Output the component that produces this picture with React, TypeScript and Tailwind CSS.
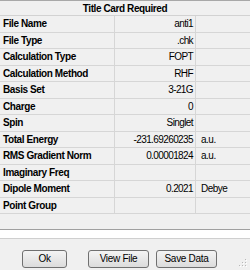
import React from "react";

const rows: { label: string; value: string; unit?: string }[] = [
  { label: "File Name", value: "anti1" },
  { label: "File Type", value: ".chk" },
  { label: "Calculation Type", value: "FOPT" },
  { label: "Calculation Method", value: "RHF" },
  { label: "Basis Set", value: "3-21G" },
  { label: "Charge", value: "0" },
  { label: "Spin", value: "Singlet" },
  { label: "Total Energy", value: "-231.69260235", unit: "a.u." },
  { label: "RMS Gradient Norm", value: "0.00001824", unit: "a.u." },
  { label: "Imaginary Freq", value: "" },
  { label: "Dipole Moment", value: "0.2021", unit: "Debye" },
  { label: "Point Group", value: "" },
];

function WinButton({ children, w }: { children: React.ReactNode; w: string }) {
  return (
    <button
      className={`${w} h-[18px] rounded-[3px] border border-[#707070] bg-gradient-to-b from-[#f4f4f4] to-[#dcdcdc] text-[10px] leading-none text-black tracking-[-0.3px]`}
    >
      {children}
    </button>
  );
}

export default function App() {
  return (
    <div
      className="w-[250px] h-[270px] bg-[#f0f0f0] flex flex-col overflow-hidden text-black"
      style={{ fontFamily: '"Liberation Sans", Arial, sans-serif' }}
    >
      {/* Header */}
      <div className="h-[16px] border-t border-[#a8a8a8] border-b border-b-[#d2d2d2] flex items-center justify-center font-bold text-[10px] tracking-[-0.4px]">
        Title Card Required
      </div>

      {/* Grid rows */}
      <div className="flex flex-col">
        {rows.map((r) => (
          <div
            key={r.label}
            className="h-[16.5px] grid grid-cols-[115px_81px_54px] border-b border-[#d6d6d6] text-[10px]"
          >
            <div className="border-r border-[#d6d6d6] flex items-center pl-[3px] font-bold tracking-[-0.4px] whitespace-nowrap">
              {r.label}
            </div>
            <div className="border-r border-[#d6d6d6] flex items-center justify-end pr-[2px] tracking-[-0.6px] whitespace-nowrap">
              {r.value}
            </div>
            <div className="flex items-center pl-[5px] tracking-[-0.5px] whitespace-nowrap">
              {r.unit}
            </div>
          </div>
        ))}
      </div>

      {/* empty grid area + white strip */}
      <div className="h-[15px]" />
      <div className="h-[10px] bg-white border-t border-[#a0a0a0] border-b border-b-[#cfcfcf]" />

      {/* Buttons */}
      <div className="relative flex-1 flex items-start pt-[11px] pl-[22px]">
        <WinButton w="w-[45px]">Ok</WinButton>
        <div className="w-[21px]" />
        <WinButton w="w-[61px]">View File</WinButton>
        <div className="w-[7px]" />
        <WinButton w="w-[61px]">Save Data</WinButton>
        <svg className="absolute right-[2px] bottom-[2px]" width="10" height="10" viewBox="0 0 10 10">
          {[
            [8, 2],
            [8, 5],
            [5, 5],
            [8, 8],
            [5, 8],
            [2, 8],
          ].map(([x, y]) => (
            <g key={`${x}-${y}`}>
              <rect x={x} y={y} width="1" height="1" fill="#ffffff" />
              <rect x={x - 1} y={y - 1} width="1" height="1" fill="#b8b8b8" />
            </g>
          ))}
        </svg>
      </div>
    </div>
  );
}
